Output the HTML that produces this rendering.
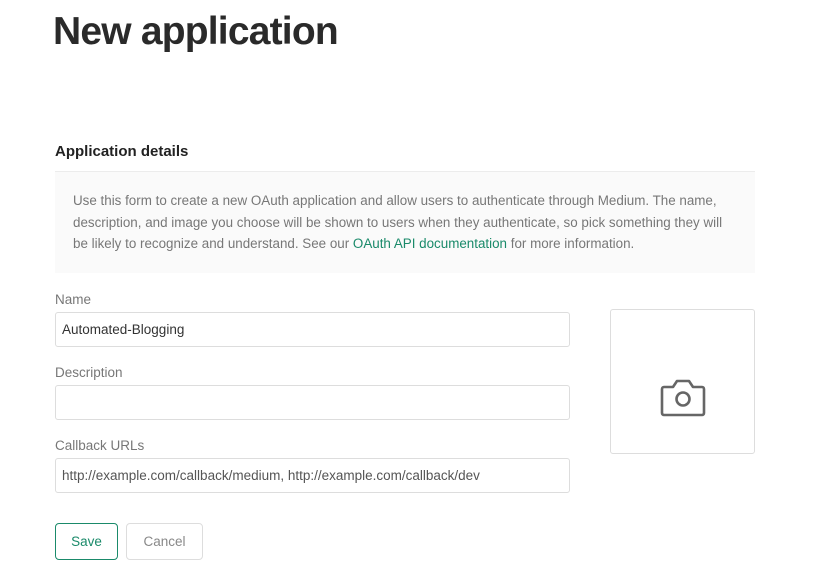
<!DOCTYPE html>
<html><head><meta charset="utf-8"><style>
*{box-sizing:border-box;margin:0;padding:0}
body{width:829px;height:574px;background:#fff;font-family:"Liberation Sans",sans-serif;position:relative;overflow:hidden}
.a{position:absolute}
h1{position:absolute;left:53px;top:10px;font-size:39px;font-weight:bold;color:#2a2a2a;letter-spacing:-0.8px}
.h2{left:55px;top:143px;font-size:15px;font-weight:bold;color:#222}
.info{left:55px;top:171px;width:700px;height:102px;background:#fafafa;border-top:1px solid #ececec;padding:18px 18px;font-size:13.4px;line-height:21.6px;color:#777}
.info span{color:#1a8a6a}
.lbl{font-size:13.5px;color:#777;left:55px}
.in{left:55px;width:515px;height:35px;border:1px solid #ddd;border-radius:3px;font-size:13.5px;color:#444;padding:9px 6px}
.img{left:610px;top:309px;width:145px;height:145px;border:1px solid #ddd;border-radius:3px}
.btn{top:523px;height:37px;border-radius:4px;font-size:13.5px;text-align:center;line-height:35px}
</style></head><body>
<h1>New application</h1>
<div class="a h2">Application details</div>
<div class="a info">Use this form to create a new OAuth application and allow users to authenticate through Medium. The name, description, and image you choose will be shown to users when they authenticate, so pick something they will be likely to recognize and understand. See our <span>OAuth API documentation</span> for more information.</div>
<div class="a lbl" style="top:292px">Name</div>
<div class="a in" style="top:312px;color:#333">Automated-Blogging</div>
<div class="a lbl" style="top:365px">Description</div>
<div class="a in" style="top:385px"></div>
<div class="a lbl" style="top:438px">Callback URLs</div>
<div class="a in" style="top:458px;color:#555">http://example.com/callback/medium, http://example.com/callback/dev</div>
<div class="a img"><svg class="a" style="left:49px;top:69px" width="46" height="38" viewBox="0 0 46 38"><path d="M4 8h9l4-6h12l4 6h9a2 2 0 0 1 2 2v24a2 2 0 0 1-2 2H4a2 2 0 0 1-2-2V10a2 2 0 0 1 2-2z" fill="none" stroke="#666" stroke-width="2.6" stroke-linejoin="round"/><circle cx="23" cy="20" r="6.5" fill="none" stroke="#666" stroke-width="2.6"/></svg></div>
<div class="a btn" style="left:55px;width:63px;border:1px solid #1a8a6a;color:#1a8a6a">Save</div>
<div class="a btn" style="left:126px;width:77px;border:1px solid #ddd;color:#888">Cancel</div>
</body></html>
